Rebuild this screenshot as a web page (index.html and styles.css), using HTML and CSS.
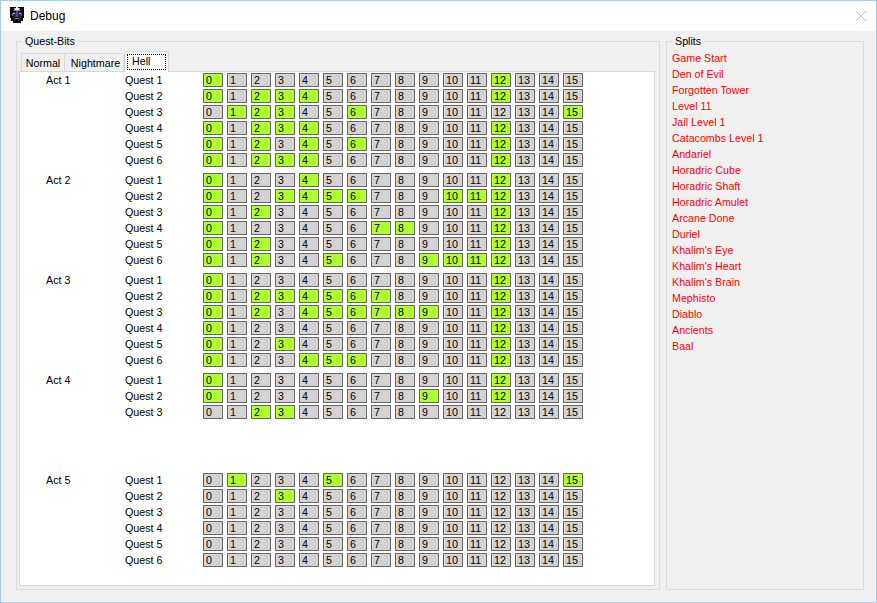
FILE: index.html
```html
<!DOCTYPE html>
<html lang="en">
<head>
  <meta charset="UTF-8">
  <meta name="viewport" content="width=device-width, initial-scale=1.0">
  <title>Debug</title>
  <link rel="stylesheet" href="styles.css">
</head>
<body>
  <div class="window">
    <div class="titlebar">
      <svg class="app-icon" width="16" height="16" viewBox="0 0 16 16" shape-rendering="crispEdges">
        <path fill="#08080c" d="M1 0h14v11h-1v3h-2v2H4v-2H2v-3H1z"/>
        <path fill="#8e8ea0" d="M5 1h6v3H5z"/>
        <path fill="#e4e4ee" d="M6 1h4v2H6z"/>
        <path fill="#ffffff" d="M7 0h2v2H7z"/>
        <path fill="#2a2548" d="M4 5h8v6h-1v2H5v-2H4z"/>
        <path fill="#5b4a8c" d="M7 4h2v6H7z"/>
        <path fill="#3a5fb0" d="M3 6h1v3H3zM12 6h1v3h-1z"/>
        <path fill="#e6d23c" d="M4 6h2v1H4zM10 6h2v1h-2z"/>
        <path fill="#08080c" d="M6 10h4v1H6z"/>
        <path fill="#77778a" d="M6 11h4v1H6z"/>
        <path fill="#08080c" d="M7 12h2v1H7z"/>
      </svg>
      <span class="title">Debug</span>
      <svg class="close" width="10" height="10" viewBox="0 0 10 10">
        <path d="M0 0L10 10M10 0L0 10" stroke="#c6c6c6" stroke-width="1" fill="none"/>
      </svg>
    </div>

    <div class="content">
      <fieldset class="group quest-group">
        <legend>Quest-Bits</legend>
        <div class="tabs">
          <div class="tab tab-normal">Normal</div>
          <div class="tab tab-nightmare">Nightmare</div>
          <div class="tab tab-active"><span class="focus">Hell</span></div>
        </div>
        <div class="tab-page" id="acts"></div>
      </fieldset>

      <fieldset class="group splits-group">
        <legend>Splits</legend>
        <ul class="splits" id="splits"></ul>
      </fieldset>
    </div>
  </div>

  <script src="script.js"></script>
</body>
</html>
```

FILE: styles.css
```css
* {
  box-sizing: border-box;
}

html, body {
  margin: 0;
  padding: 0;
  overflow: hidden;
}

body {
  font-family: "Liberation Sans", Arial, sans-serif;
  font-size: 10.7px;
  color: #000;
  background: #f0f0f0;
}

.window {
  width: 877px;
  height: 603px;
  border: 1px solid #a6cdec;
  background: #f0f0f0;
}

.titlebar {
  display: flex;
  align-items: center;
  height: 30px;
  padding: 0 10px 0 8px;
  background: #fff;
}

.app-icon {
  margin: 0 5px 2px 0;
}

.title {
  font-size: 12px;
}

.close {
  margin-left: auto;
}

.content {
  display: flex;
  gap: 6px;
  padding: 4px 12px 13px 15px;
}

.group {
  margin: 0;
  min-width: 0;
  border: 1px solid #dcdcdc;
}

.group legend {
  padding: 0 3px;
  line-height: 13px;
}

.quest-group {
  width: 644px;
  padding: 3px 4px 3px 2px;
}

.quest-group legend {
  margin-left: 3px;
}

.splits-group {
  width: 198px;
  padding: 2px 5px;
}

.tabs {
  display: flex;
  align-items: flex-end;
  height: 20px;
  padding-left: 2px;
}

.tab {
  height: 18px;
  line-height: 18px;
  border: 1px solid #d9d9d9;
  border-bottom: 0;
  border-left: 0;
  text-align: center;
}

.tab-normal {
  width: 44px;
  border-left: 1px solid #d9d9d9;
}

.tab-nightmare {
  width: 59px;
  padding-left: 3px;
}

.tab-active {
  position: relative;
  z-index: 1;
  width: 45px;
  height: 21px;
  margin-bottom: -1px;
  padding: 2px 2px 0;
  background: #fff;
  border-left: 1px solid #d9d9d9;
}

.focus {
  display: block;
  height: 16px;
  line-height: 13px;
  padding-left: 4px;
  border: 1px dotted #000;
  text-align: left;
}

.tab-page {
  height: 515px;
  padding: 0;
  background: #fff;
  border: 1px solid #d9d9d9;
}

.act {
  display: flex;
  height: 100px;
}

.act-name {
  width: 105px;
  padding-left: 26px;
  line-height: 16px;
}

.row {
  display: flex;
  align-items: center;
  height: 16px;
}

.quest-name {
  width: 78px;
}

.bits {
  display: flex;
  gap: 4px;
}

.bit {
  width: 20px;
  height: 14px;
  margin: 0;
  padding: 0 0 0 2px;
  font: inherit;
  line-height: 12px;
  color: #000;
  text-align: left;
  background: #d3d3d3;
  border: 1px solid #666;
  border-radius: 0;
}

.bit.on {
  background: #adff2f;
}

.splits {
  margin: 0;
  padding: 0;
  list-style: none;
  color: #f00;
}

.splits li {
  height: 16px;
  line-height: 16px;
}
```

FILE: script.js
```js
// bits that are set, per act and quest
const acts = [
  { name: "Act 1", quests: [
    [0, 12],
    [0, 2, 3, 4, 12],
    [1, 2, 3, 6, 15],
    [0, 2, 3, 4, 12],
    [0, 2, 4, 6, 12],
    [0, 2, 3, 4, 12]
  ] },
  { name: "Act 2", quests: [
    [0, 4, 12],
    [0, 3, 4, 5, 6, 10, 11, 12],
    [0, 2, 12],
    [0, 7, 8, 12],
    [0, 2, 12],
    [0, 2, 5, 9, 10, 11, 12]
  ] },
  { name: "Act 3", quests: [
    [0, 12],
    [0, 2, 3, 4, 5, 6, 7, 12],
    [0, 2, 4, 5, 6, 7, 8, 9, 12],
    [0, 12],
    [0, 3, 12],
    [0, 4, 5, 6, 12]
  ] },
  { name: "Act 4", quests: [
    [0, 12],
    [0, 9, 12],
    [2, 3]
  ] },
  { name: "Act 5", quests: [
    [1, 5, 15],
    [3],
    [],
    [],
    [],
    []
  ] }
];

const splits = [
  "Game Start", "Den of Evil", "Forgotten Tower", "Level 11", "Jail Level 1",
  "Catacombs Level 1", "Andariel", "Horadric Cube", "Horadric Shaft",
  "Horadric Amulet", "Arcane Done", "Duriel", "Khalim's Eye", "Khalim's Heart",
  "Khalim's Brain", "Mephisto", "Diablo", "Ancients", "Baal"
];

const actsDiv = document.getElementById("acts");
const splitsList = document.getElementById("splits");

acts.forEach(act => {
  let html = `<div class="act-name">${act.name}</div><div class="quests">`;
  act.quests.forEach((bits, i) => {
    html += `<div class="row"><div class="quest-name">Quest ${i + 1}</div><div class="bits">`;
    for (let b = 0; b < 16; b++) {
      html += `<button class="bit${bits.includes(b) ? " on" : ""}">${b}</button>`;
    }
    html += "</div></div>";
  });
  const div = document.createElement("div");
  div.className = "act";
  div.innerHTML = html + "</div>";
  actsDiv.appendChild(div);
});

splits.forEach(name => {
  const li = document.createElement("li");
  li.textContent = name;
  splitsList.appendChild(li);
});
```
